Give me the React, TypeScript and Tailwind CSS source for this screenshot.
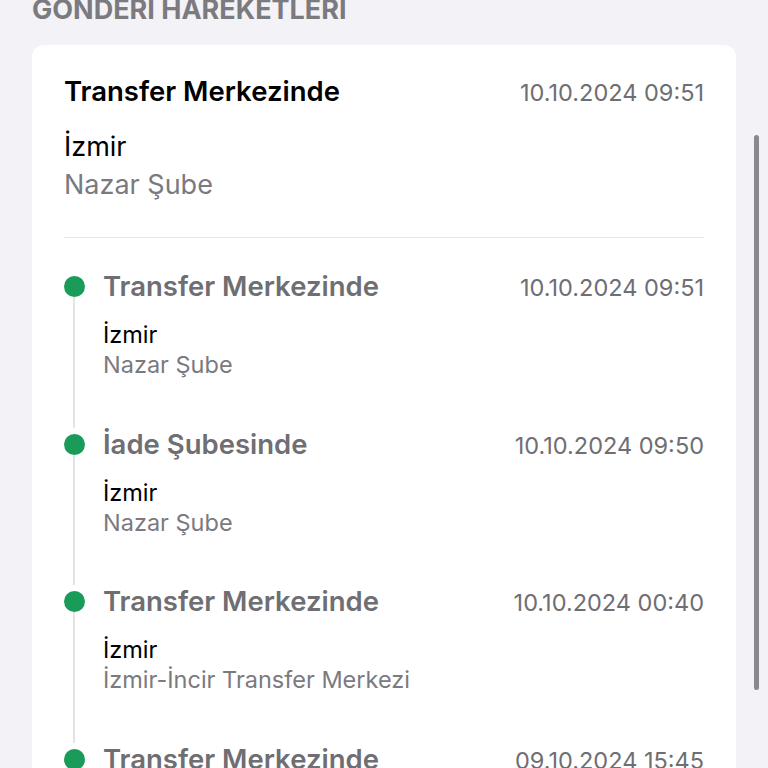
import React from 'react';

type Movement = {
  title: string;
  date: string;
  city: string;
  branch: string;
};

const movements: Movement[] = [
  { title: 'Transfer Merkezinde', date: '10.10.2024 09:51', city: 'İzmir', branch: 'Nazar Şube' },
  { title: 'İade Şubesinde', date: '10.10.2024 09:50', city: 'İzmir', branch: 'Nazar Şube' },
  { title: 'Transfer Merkezinde', date: '10.10.2024 00:40', city: 'İzmir', branch: 'İzmir-İncir Transfer Merkezi' },
  { title: 'Transfer Merkezinde', date: '09.10.2024 15:45', city: 'İzmir', branch: 'İzmir-İncir Transfer Merkezi' },
];

function TimelineItem({ item }: { item: Movement }) {
  return (
    <div className="flex gap-[19px]">
      <div className="flex w-[20px] flex-col items-center">
        <div className="mt-[6px] h-[21px] w-[21px] shrink-0 rounded-full bg-[#1a9b5a]" />
        <div className="w-[2px] flex-1 bg-[#e4e4e6]" />
      </div>
      <div className="flex-1 pb-[48.5px]">
        <div className="flex items-baseline justify-between">
          <span className="text-[27.5px] leading-[32px] font-semibold text-[#6e6e73]">{item.title}</span>
          <span className="text-[23.5px] leading-[32px] text-[#6e6e73]">{item.date}</span>
        </div>
        <p className="mt-[17px] text-[23.5px] leading-[28px] text-black">{item.city}</p>
        <p className="mt-[2px] text-[23.5px] leading-[28px] text-[#7a7a7f]">{item.branch}</p>
      </div>
    </div>
  );
}

export default function App() {
  return (
    <div
      className="relative h-[768px] w-[768px] overflow-hidden bg-[#f2f2f7]"
      style={{ fontFamily: 'Inter, "Noto Sans", sans-serif' }}
    >
      <div className="px-8">
        <h2 className="-mt-[2px] text-[27px] leading-[24px] font-bold uppercase text-[#7a7a7f]">
          Gönderi Hareketleri
        </h2>

        <div className="mt-[23px] rounded-xl bg-white px-8 pt-[30px]">
          <div className="flex items-baseline justify-between">
            <span className="text-[27.5px] leading-[32px] font-semibold text-black">Transfer Merkezinde</span>
            <span className="text-[23.5px] leading-[32px] text-[#6e6e73]">10.10.2024 09:51</span>
          </div>
          <p className="mt-[22px] text-[27px] leading-[32px] text-black">İzmir</p>
          <p className="mt-[7px] text-[27px] leading-[30px] text-[#7a7a7f]">Nazar Şube</p>

          <div className="mt-[37px] h-px bg-[#e6e6e8]" />

          <div className="pt-[32px]">
            {movements.map((m, i) => (
              <TimelineItem key={i} item={m} />
            ))}
          </div>
        </div>
      </div>

      {/* overlay scrollbar */}
      <div className="absolute left-[754px] top-[135px] h-[555px] w-[5px] rounded-full bg-[#8a8a8e]" />
    </div>
  );
}
